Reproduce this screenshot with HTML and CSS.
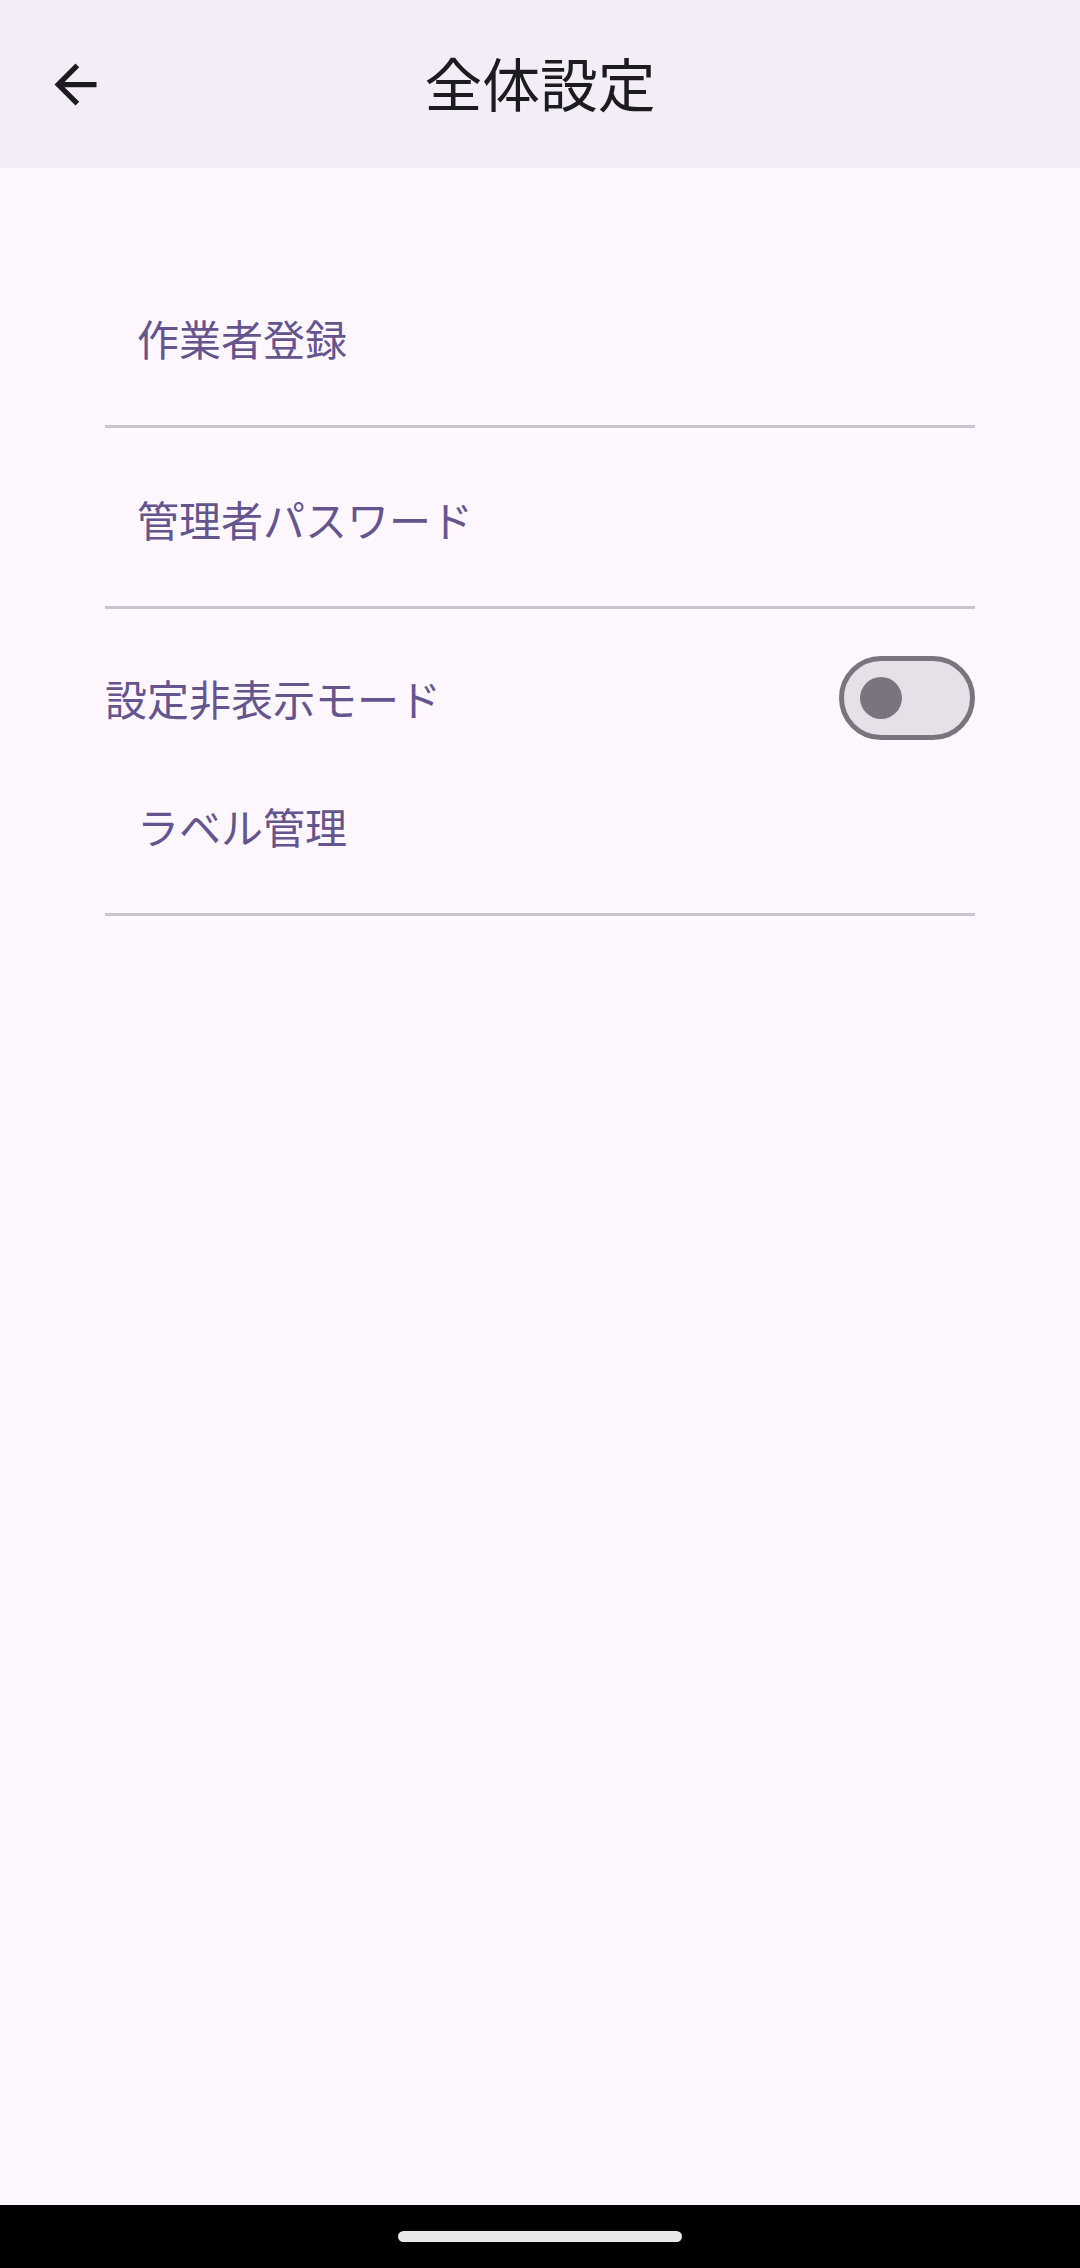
FILE: index.html
```html
<!DOCTYPE html>
<html lang="ja">
<head>
<meta charset="utf-8">
<title>全体設定</title>
<link rel="stylesheet" href="styles.css">
</head>
<body>
<div class="screen">
  <header class="topbar">
    <button class="back" aria-label="戻る">
      <svg viewBox="0 0 24 24" width="63" height="63"><path d="M20 11H7.83l5.59-5.59L12 4l-8 8 8 8 1.41-1.41L7.83 13H20v-2z" fill="#1D1B20"/></svg>
    </button>
    <h1 class="title">全体設定</h1>
  </header>
  <main class="content">
    <div class="item">
      <div class="item-btn">作業者登録</div>
      <div class="divider"></div>
    </div>
    <div class="item">
      <div class="item-btn">管理者パスワード</div>
      <div class="divider"></div>
    </div>
    <div class="switch-row">
      <span class="switch-label">設定非表示モード</span>
      <div class="switch"><div class="thumb"></div></div>
    </div>
    <div class="item item-last">
      <div class="item-btn">ラベル管理</div>
      <div class="divider"></div>
    </div>
  </main>
  <footer class="navbar"><div class="handle"></div></footer>
</div>
</body>
</html>
```
FILE: styles.css
```css
html, body {
  margin: 0;
  padding: 0;
  background: #FEF7FF;
  font-family: "Noto Sans CJK JP", "Noto Sans", sans-serif;
}
.screen {
  display: flex;
  flex-direction: column;
  min-height: 2268px;
}
.topbar {
  height: 168px;
  background: #F3EDF7;
  display: flex;
  align-items: center;
  justify-content: center;
  position: relative;
}
.back {
  position: absolute;
  left: 43.5px;
  top: 52.5px;
  width: 63px;
  height: 63px;
  padding: 0;
  border: 0;
  background: transparent;
  display: flex;
}
.title {
  margin: 0 0 4px;
  font-size: 57.75px;
  font-weight: 400;
  line-height: 80px;
  color: #1D1B20;
}
.content {
  flex: 1;
  padding: 119px 105px 0;
  display: flex;
  flex-direction: column;
}
.item-btn {
  height: 106px;
  line-height: 102px;
  padding-left: 32px;
  font-size: 42px;
  color: #65558F;
}
.divider {
  margin-top: 32px;
  height: 2.625px;
  background: #CAC4D0;
}
.item + .item {
  margin-top: 40.5px;
}
.switch-row {
  margin-top: 47.5px;
  height: 84px;
  display: flex;
  align-items: center;
  justify-content: space-between;
}
.switch-label {
  font-size: 42px;
  color: #65558F;
  line-height: 84px;
}
.switch {
  width: 136px;
  height: 84px;
  box-sizing: border-box;
  border: 5.25px solid #79747E;
  border-radius: 42px;
  background: #E6E0E9;
  display: flex;
  align-items: center;
  padding-left: 15.75px;
}
.thumb {
  width: 42px;
  height: 42px;
  border-radius: 50%;
  background: #79747E;
}
.item-last {
  margin-top: 35px;
}
.navbar {
  height: 63px;
  background: #000;
  display: flex;
  justify-content: center;
  padding-top: 26px;
  box-sizing: border-box;
}
.handle {
  width: 284px;
  height: 10.5px;
  border-radius: 6px;
  background: #E8E8E8;
}
```
